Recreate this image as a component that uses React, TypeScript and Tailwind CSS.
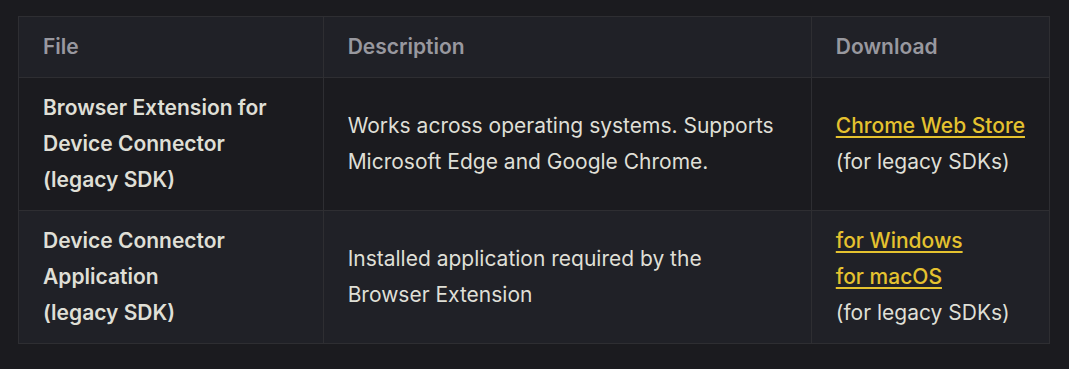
import React from "react";

const link = "whitespace-nowrap text-[#e5c22f] font-medium underline decoration-[2px] underline-offset-[3px]";

export default function App() {
  return (
    <div className="min-h-[369px] w-full bg-[#1b1b1f] pt-[16px] pl-[18px]" style={{ fontFamily: "Inter, 'Noto Sans', sans-serif" }}>
      <table className="border-collapse text-[21px] leading-[36px] text-[#dfdfd6]" style={{ width: 1032 }}>
        <colgroup>
          <col style={{ width: 305 }} />
          <col style={{ width: 489 }} />
          <col style={{ width: 238 }} />
        </colgroup>
        <thead>
          <tr className="bg-[#202127]">
            <th className="border border-[#2e2e32] px-[24px] py-[12px] text-left font-semibold text-[#98989f]">File</th>
            <th className="border border-[#2e2e32] px-[24px] py-[12px] text-left font-semibold text-[#98989f]">Description</th>
            <th className="border border-[#2e2e32] px-[24px] py-[12px] text-left font-semibold text-[#98989f]">Download</th>
          </tr>
        </thead>
        <tbody>
          <tr className="bg-[#1b1b1f]">
            <td className="border border-[#2e2e32] px-[24px] py-[12px] font-semibold">
              Browser Extension for
              <br />
              Device Connector
              <br />
              (legacy SDK)
            </td>
            <td className="border border-[#2e2e32] px-[24px] py-[12px]">
              Works across operating systems. Supports Microsoft Edge and Google Chrome.
            </td>
            <td className="border border-[#2e2e32] px-[24px] py-[12px] whitespace-nowrap">
              <a className={link}>Chrome Web Store</a>
              <br />
              (for legacy SDKs)
            </td>
          </tr>
          <tr className="bg-[#202127]">
            <td className="border border-[#2e2e32] px-[24px] py-[12px] font-semibold">
              Device Connector
              <br />
              Application
              <br />
              (legacy SDK)
            </td>
            <td className="border border-[#2e2e32] px-[24px] py-[12px]">
              Installed application required by the
              <br />
              Browser Extension
            </td>
            <td className="border border-[#2e2e32] px-[24px] py-[12px] whitespace-nowrap">
              <a className={link}>for Windows</a>
              <br />
              <a className={link}>for macOS</a>
              <br />
              (for legacy SDKs)
            </td>
          </tr>
        </tbody>
      </table>
    </div>
  );
}
